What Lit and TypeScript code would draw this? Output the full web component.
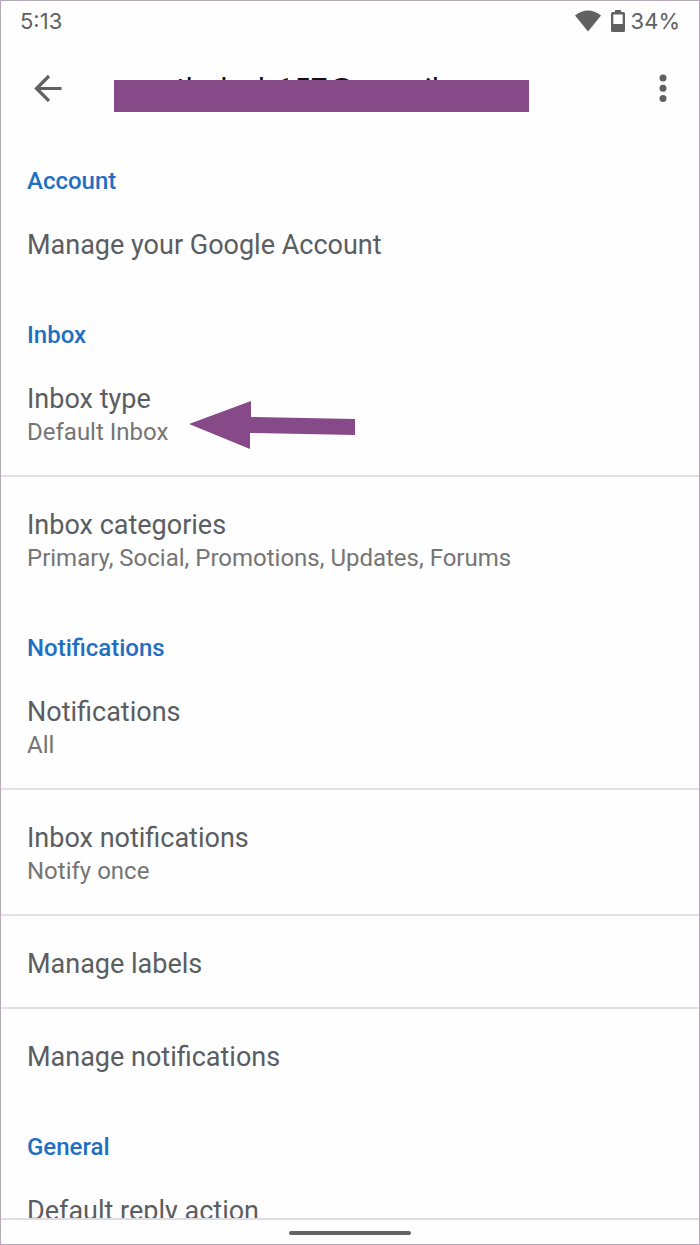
import { LitElement, html, css, nothing } from "lit";
import { customElement } from "lit/decorators.js";

interface Item {
  title: string;
  summary?: string;
  pointer?: boolean;
}

interface Section {
  heading: string;
  items: Item[];
}

const SECTIONS: Section[] = [
  { heading: "Account", items: [{ title: "Manage your Google Account" }] },
  {
    heading: "Inbox",
    items: [
      { title: "Inbox type", summary: "Default Inbox", pointer: true },
      { title: "Inbox categories", summary: "Primary, Social, Promotions, Updates, Forums" },
    ],
  },
  {
    heading: "Notifications",
    items: [
      { title: "Notifications", summary: "All" },
      { title: "Inbox notifications", summary: "Notify once" },
      { title: "Manage labels" },
      { title: "Manage notifications" },
    ],
  },
  { heading: "General", items: [{ title: "Default reply action" }] },
];

@customElement("app-root")
export class AppRoot extends LitElement {
  static styles = css`
    :host {
      display: flex;
      flex-direction: column;
      box-sizing: border-box;
      height: 100vh;
      overflow: hidden;
      border: 1px solid #b5a8b8;
      background: #fefefe;
      color: #5a5d61;
      font-family: Roboto, "Noto Sans", sans-serif;
    }
    button {
      border: 0;
      margin: 0;
      padding: 0;
      background: none;
      color: inherit;
      font: inherit;
      text-align: left;
      cursor: pointer;
    }
    svg {
      display: block;
      flex: none;
    }
    .status {
      display: flex;
      align-items: center;
      justify-content: space-between;
      flex: none;
      height: 40px;
      padding: 0 19px;
      color: #616161;
      font: 400 22px/40px Inter, Roboto, sans-serif;
    }
    .indicators {
      display: flex;
      align-items: center;
    }
    .battery {
      margin: 0 6px 0 10px;
    }
    .appbar {
      display: flex;
      align-items: center;
      flex: none;
      height: 94px;
      padding: 0 20px 0 31px;
      color: #616161;
    }
    .icon-button {
      display: flex;
      justify-content: center;
      flex: none;
      width: 32px;
    }
    .account {
      position: relative;
      flex: 1;
      margin: 0 118px 0 50px;
      height: 32px;
      color: #111;
      font: 400 30px/34px Roboto, sans-serif;
      white-space: nowrap;
    }
    .account h1 {
      display: flex;
      margin: 0;
      padding-left: 62px;
      font: inherit;
    }
    .gap-s {
      margin-left: 18px;
    }
    .gap-m {
      margin-left: 30px;
    }
    .gap-xs {
      margin-left: 12px;
    }
    .gap-l {
      margin-left: 70px;
    }
    .redaction {
      position: absolute;
      top: 8px;
      left: 0;
      width: 100%;
      height: 32px;
      background: #874a89;
    }
    main {
      flex: 1;
      min-height: 0;
      margin-top: -1px;
      overflow: hidden;
    }
    h2 {
      margin: 0;
      padding: 31px 26px 0;
      color: #1f6fc2;
      font-size: 24px;
      font-weight: 500;
      line-height: 32px;
    }
    .item {
      position: relative;
      display: block;
      width: 100%;
      padding: 31px 26px 26px;
    }
    .item + .item {
      border-top: 2px solid #e2e2e4;
    }
    .title {
      display: block;
      font-size: 27px;
      line-height: 34px;
    }
    .summary {
      display: block;
      color: #757575;
      font-size: 24px;
      line-height: 33px;
    }
    .pointer {
      position: absolute;
      left: 187px;
      top: 49px;
    }
    .nav {
      display: flex;
      justify-content: center;
      align-items: center;
      flex: none;
      height: 22px;
      padding-top: 2px;
      border-top: 2px solid #e0dde1;
    }
    .handle {
      width: 122px;
      height: 4px;
      border-radius: 2px;
      background: #636363;
    }
  `;

  private renderItem(item: Item) {
    return html`<button class="item">
      <span class="title">${item.title}</span>
      ${item.summary ? html`<span class="summary">${item.summary}</span>` : nothing}
      ${item.pointer
        ? html`<svg class="pointer" width="168" height="50" viewBox="0 0 168 50" aria-hidden="true">
            <path d="M1 24 63 1V17L167 19V35L62 33V49Z" fill="#874a89" />
          </svg>`
        : nothing}
    </button>`;
  }

  render() {
    return html`
      <div class="status">
        <span>5:13</span>
        <div class="indicators">
          <svg width="26" height="22" viewBox="0 0 26 22" aria-hidden="true">
            <path d="M0 5.5Q13-4.5 26 5.5L13 21.5Z" fill="currentColor" />
          </svg>
          <svg class="battery" width="14" height="22" viewBox="0 0 14 22" aria-hidden="true">
            <path
              fill="currentColor"
              fill-rule="evenodd"
              d="M4 0H10V2H12.5Q14 2 14 3.5V20.5Q14 22 12.5 22H1.5Q0 22 0 20.5V3.5Q0 2 1.5 2H4ZM2.3 4.5V14H11.7V4.5Z"
            />
          </svg>
          <span>34%</span>
        </div>
      </div>
      <header class="appbar">
        <button class="icon-button" aria-label="Back">
          <svg width="28" height="28" viewBox="0 0 28 28" fill="none" stroke="currentColor" stroke-width="3.2" aria-hidden="true">
            <path d="M27.5 14.5H3M15 2 2.5 14.5 15 27" />
          </svg>
        </button>
        <div class="account">
          <h1><span>th</span><span class="gap-s">l</span><span class="gap-m">l</span><span class="gap-xs">157@</span><span class="gap-l">il</span></h1>
          <div class="redaction"></div>
        </div>
        <button class="icon-button" aria-label="More options">
          <svg width="8" height="28" viewBox="0 0 8 28" fill="currentColor" aria-hidden="true">
            <circle cx="4" cy="4" r="3.5" />
            <circle cx="4" cy="14.3" r="3.5" />
            <circle cx="4" cy="24.5" r="3.5" />
          </svg>
        </button>
      </header>
      <main>
        ${SECTIONS.map(
          (s) => html`<section>
            <h2>${s.heading}</h2>
            ${s.items.map((i) => this.renderItem(i))}
          </section>`
        )}
      </main>
      <footer class="nav"><div class="handle"></div></footer>
    `;
  }
}
